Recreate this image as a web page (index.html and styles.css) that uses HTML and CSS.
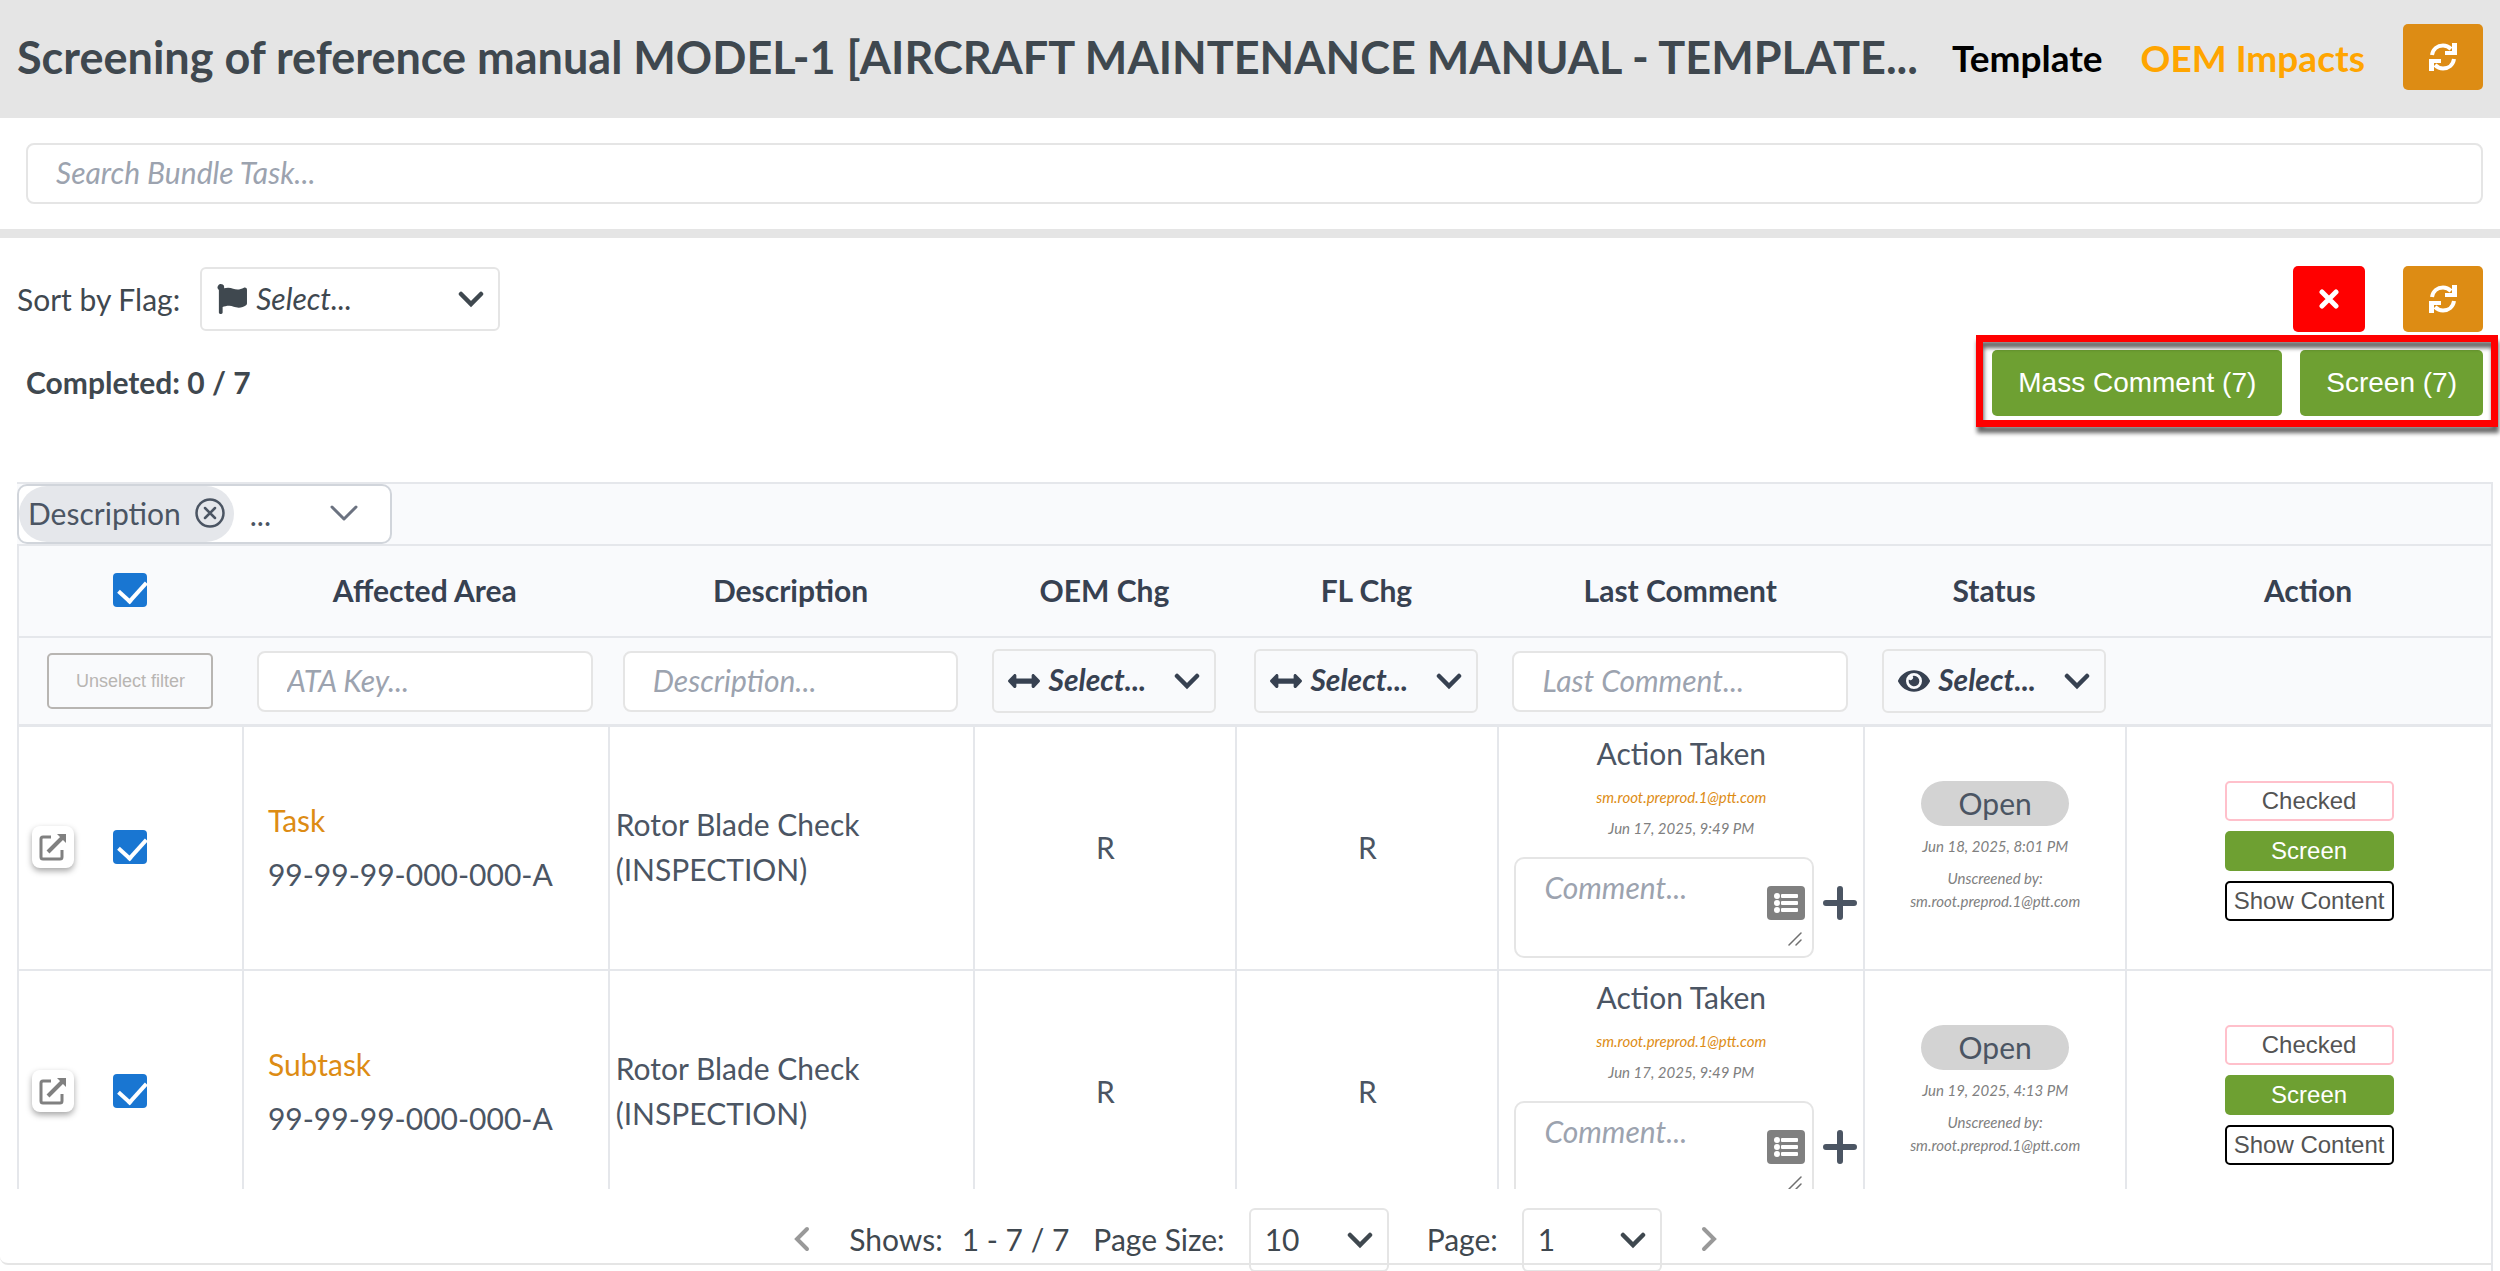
FILE: index.html
```html
<!DOCTYPE html>
<html lang="en">
<head>
    <meta charset="UTF-8">
    <title>Screening of reference manual</title>
    <meta name="viewport" content="width=device-width, initial-scale=1.0">
    <link rel="stylesheet" href="styles.css">
</head>
<body>
    <!-- Shared icons -->
    <svg class="sprite" aria-hidden="true">
        <symbol id="i-refresh" viewBox="0 0 28 28">
            <path d="M3 12C4 6 8.500 2.500 14 2.500c3.500 0 6 1.500 8 3.500M25 16c-1 6-5.500 9.500-11 9.500-3.500 0-6-1.500-8-3.500" fill="none" stroke="currentColor" stroke-width="4"/>
            <path d="M28 0v12H16V8h7V0zM0 28V16h12V20H5v8z" fill="currentColor"/>
        </symbol>
        <symbol id="i-times" viewBox="0 0 20 20">
            <path d="M3 3l14 14M17 3L3 17" fill="none" stroke="currentColor" stroke-width="5" stroke-linecap="round"/>
        </symbol>
        <symbol id="i-chevron" viewBox="0 0 26 18">
            <path d="M3 4l10 10L23 4" fill="none" stroke="currentColor" stroke-width="4.500" stroke-linecap="round"/>
        </symbol>
        <symbol id="i-angle" viewBox="0 0 28 18">
            <path d="M2 2l12 12L26 2" fill="none" stroke="currentColor" stroke-width="3" stroke-linecap="round" stroke-linejoin="round"/>
        </symbol>
        <symbol id="i-page" viewBox="0 0 18 28">
            <path d="M14 4L4 14l10 10" fill="none" stroke="currentColor" stroke-width="4" stroke-linecap="round"/>
        </symbol>
        <symbol id="i-flag" viewBox="0 0 512 512">
            <path d="M349.600 94.100c-51.100 0-92.900-32-161.300-32-25.300 0-48 4.400-69.100 12.100A56 56 0 1 0 32 101.900V488c0 13.300 10.700 24 24 24h16c13.300 0 24-10.700 24-24v-94.600c28.300-12.100 63.600-22.100 114.400-22.100 51.100 0 92.900 32 161.300 32 48.900 0 88-16.500 123.900-41.100 10-6.800 16-18.100 16-30.200V96c0-26.800-27.800-44.200-52-32.900-34.300 16-76.500 31-110 31z" fill="currentColor"/>
        </symbol>
        <symbol id="i-arrows-h" viewBox="0 0 512 256">
            <path d="M378 39v47H134V39c0-21-26-32-41-17L7 111c-9 10-9 25 0 34l86 89c15 15 41 4 41-17v-47h244v47c0 21 26 32 41 17l86-89c9-9 9-24 0-34l-86-89c-15-15-41-4-41 17z" fill="currentColor"/>
        </symbol>
        <symbol id="i-eye" viewBox="0 0 576 512">
            <path d="M572.500 241.400C518.300 135.600 410.900 64 288 64S57.700 135.600 3.500 241.400a32.400 32.400 0 0 0 0 29.200C57.700 376.400 165.100 448 288 448s230.300-71.600 284.500-177.400a32.400 32.400 0 0 0 0-29.200zM288 400a144 144 0 1 1 144-144 143.900 143.900 0 0 1-144 144zm0-240a95.300 95.300 0 0 0-25.300 3.800 47.900 47.900 0 0 1-66.900 66.900A95.800 95.800 0 1 0 288 160z" fill="currentColor"/>
        </symbol>
        <symbol id="i-remove" viewBox="0 0 30 30">
            <circle cx="15" cy="15" r="13.500" fill="none" stroke="currentColor" stroke-width="2.500"/>
            <path d="M10 10l10 10M20 10L10 20" fill="none" stroke="currentColor" stroke-width="2.500" stroke-linecap="round"/>
        </symbol>
        <symbol id="i-open" viewBox="0 0 28 28">
            <path d="M12 4H4a2 2 0 0 0-2 2v18a2 2 0 0 0 2 2h17a2 2 0 0 0 2-2v-7" fill="none" stroke="currentColor" stroke-width="3"/>
            <path d="M9 19L24 4" fill="none" stroke="currentColor" stroke-width="4"/>
            <path d="M18 1h9v9z" fill="currentColor"/>
        </symbol>
        <symbol id="i-list" viewBox="0 0 38 34">
            <rect width="38" height="34" rx="4" fill="#808080"/>
            <g fill="#fff">
                <circle cx="10" cy="10" r="3"/><circle cx="10" cy="17" r="3"/><circle cx="10" cy="24" r="3"/>
                <rect x="14" y="8" width="17" height="4" rx="1"/><rect x="14" y="15" width="17" height="4" rx="1"/><rect x="14" y="22" width="17" height="4" rx="1"/>
            </g>
        </symbol>
        <symbol id="i-grip" viewBox="0 0 14 14">
            <path d="M1 13L13 1M8 13l5-5" fill="none" stroke="#707070" stroke-width="1.500" stroke-linecap="round"/>
        </symbol>
        <symbol id="i-plus" viewBox="0 0 34 34">
            <path d="M17 3v28M3 17h28" fill="none" stroke="currentColor" stroke-width="6" stroke-linecap="round"/>
        </symbol>
    </svg>

    <header class="header">
        <h1>Screening of reference manual MODEL-1 [AIRCRAFT MAINTENANCE MANUAL - TEMPLATE...</h1>
        <nav class="header-links">
            <a href="#" class="link-template">Template</a>
            <a href="#" class="link-impacts">OEM Impacts</a>
        </nav>
        <button class="btn btn-refresh" aria-label="Refresh"><svg class="icon"><use href="#i-refresh"/></svg></button>
    </header>

    <div class="search">
        <input type="text" class="field" placeholder="Search Bundle Task..." aria-label="Search Bundle Task">
    </div>

    <main class="panel">
        <div class="toolbar">
            <label for="flagSort">Sort by Flag:</label>
            <div class="select-box flag-select">
                <select id="flagSort"><option>Select...</option></select>
                <svg class="lead"><use href="#i-flag"/></svg>
                <svg class="arrow"><use href="#i-chevron"/></svg>
            </div>
            <button class="btn btn-clear" aria-label="Clear"><svg class="icon-small"><use href="#i-times"/></svg></button>
            <button class="btn btn-refresh" aria-label="Refresh list"><svg class="icon"><use href="#i-refresh"/></svg></button>
        </div>

        <div class="summary">
            <div class="completed">Completed: 0 / 7</div>
            <div class="mass-actions">
                <button class="btn btn-green">Mass Comment (7)</button>
                <button class="btn btn-green">Screen (7)</button>
                <div class="highlight"></div>
            </div>
        </div>

        <section class="grid">
            <div class="grid-scroll">
                <div class="columns-bar">
                    <div class="column-picker">
                        <span class="chip">Description <button aria-label="Remove Description"><svg><use href="#i-remove"/></svg></button></span>
                        <span>...</span>
                        <button class="picker-toggle" aria-label="Choose columns"><svg><use href="#i-angle"/></svg></button>
                    </div>
                </div>

                <table class="tasks">
                    <colgroup>
                        <col class="col-check"><col class="col-wide"><col class="col-wide"><col class="col-mid"><col class="col-mid"><col class="col-wide"><col class="col-mid"><col class="col-wide">
                    </colgroup>
                    <thead>
                        <tr class="titles">
                            <th><input type="checkbox" class="check" checked aria-label="Select all"></th>
                            <th>Affected Area</th>
                            <th>Description</th>
                            <th>OEM Chg</th>
                            <th>FL Chg</th>
                            <th>Last Comment</th>
                            <th>Status</th>
                            <th>Action</th>
                        </tr>
                        <tr class="filters">
                            <th><button class="btn-unselect" disabled>Unselect filter</button></th>
                            <th><input type="text" class="field" placeholder="ATA Key..." aria-label="ATA Key"></th>
                            <th><input type="text" class="field" placeholder="Description..." aria-label="Description"></th>
                            <th>
                                <div class="select-box">
                                    <select aria-label="OEM Chg"><option>Select...</option></select>
                                    <svg class="lead"><use href="#i-arrows-h"/></svg>
                                    <svg class="arrow"><use href="#i-chevron"/></svg>
                                </div>
                            </th>
                            <th>
                                <div class="select-box">
                                    <select aria-label="FL Chg"><option>Select...</option></select>
                                    <svg class="lead"><use href="#i-arrows-h"/></svg>
                                    <svg class="arrow"><use href="#i-chevron"/></svg>
                                </div>
                            </th>
                            <th><input type="text" class="field" placeholder="Last Comment..." aria-label="Last Comment"></th>
                            <th>
                                <div class="select-box">
                                    <select aria-label="Status"><option>Select...</option></select>
                                    <svg class="lead"><use href="#i-eye"/></svg>
                                    <svg class="arrow"><use href="#i-chevron"/></svg>
                                </div>
                            </th>
                            <th></th>
                        </tr>
                    </thead>
                    <tbody>
                        <tr>
                            <td class="pick">
                                <div class="pick-row">
                                    <button class="btn-open" aria-label="Open task"><svg><use href="#i-open"/></svg></button>
                                    <input type="checkbox" class="check" checked aria-label="Select task">
                                </div>
                            </td>
                            <td class="area"><a href="#">Task</a><div>99-99-99-000-000-A</div></td>
                            <td class="desc">Rotor Blade Check (INSPECTION)</td>
                            <td>R</td>
                            <td>R</td>
                            <td class="comment">
                                <div>Action Taken</div>
                                <div class="meta mail">sm.root.preprod.1@ptt.com</div>
                                <div class="meta">Jun 17, 2025, 9:49 PM</div>
                                <div class="comment-row">
                                    <div class="comment-box">
                                        <textarea placeholder="Comment..." aria-label="Comment"></textarea>
                                        <button aria-label="Templates"><svg><use href="#i-list"/></svg></button>
                                        <svg class="grip"><use href="#i-grip"/></svg>
                                    </div>
                                    <button class="btn-add" aria-label="Add comment"><svg><use href="#i-plus"/></svg></button>
                                </div>
                            </td>
                            <td class="status">
                                <span class="badge">Open</span>
                                <div class="meta">Jun 18, 2025, 8:01 PM</div>
                                <div class="meta by">Unscreened by:<br>sm.root.preprod.1@ptt.com</div>
                            </td>
                            <td class="actions">
                                <div class="row-actions">
                                    <button class="checked">Checked</button>
                                    <button class="screen">Screen</button>
                                    <button class="show">Show Content</button>
                                </div>
                            </td>
                        </tr>
                        <tr>
                            <td class="pick">
                                <div class="pick-row">
                                    <button class="btn-open" aria-label="Open subtask"><svg><use href="#i-open"/></svg></button>
                                    <input type="checkbox" class="check" checked aria-label="Select subtask">
                                </div>
                            </td>
                            <td class="area"><a href="#">Subtask</a><div>99-99-99-000-000-A</div></td>
                            <td class="desc">Rotor Blade Check (INSPECTION)</td>
                            <td>R</td>
                            <td>R</td>
                            <td class="comment">
                                <div>Action Taken</div>
                                <div class="meta mail">sm.root.preprod.1@ptt.com</div>
                                <div class="meta">Jun 17, 2025, 9:49 PM</div>
                                <div class="comment-row">
                                    <div class="comment-box">
                                        <textarea placeholder="Comment..." aria-label="Comment"></textarea>
                                        <button aria-label="Templates"><svg><use href="#i-list"/></svg></button>
                                        <svg class="grip"><use href="#i-grip"/></svg>
                                    </div>
                                    <button class="btn-add" aria-label="Add comment"><svg><use href="#i-plus"/></svg></button>
                                </div>
                            </td>
                            <td class="status">
                                <span class="badge">Open</span>
                                <div class="meta">Jun 19, 2025, 4:13 PM</div>
                                <div class="meta by">Unscreened by:<br>sm.root.preprod.1@ptt.com</div>
                            </td>
                            <td class="actions">
                                <div class="row-actions">
                                    <button class="checked">Checked</button>
                                    <button class="screen">Screen</button>
                                    <button class="show">Show Content</button>
                                </div>
                            </td>
                        </tr>
                    </tbody>
                </table>
            </div>

            <footer class="pager">
                <button class="page-nav" aria-label="Previous page"><svg><use href="#i-page"/></svg></button>
                <span class="shows">Shows:</span>
                <span class="range">1 - 7 / 7</span>
                <label for="pageSize">Page Size:</label>
                <div class="select-box">
                    <select id="pageSize"><option>10</option></select>
                    <svg class="arrow"><use href="#i-chevron"/></svg>
                </div>
                <label for="pageNo">Page:</label>
                <div class="select-box">
                    <select id="pageNo"><option>1</option></select>
                    <svg class="arrow"><use href="#i-chevron"/></svg>
                </div>
                <button class="page-nav next" aria-label="Next page"><svg><use href="#i-page"/></svg></button>
            </footer>
        </section>
    </main>
</body>
</html>
```
FILE: styles.css
```css
* {
    box-sizing: border-box;
}

body {
    margin: 0;
    height: 100vh;
    overflow: hidden;
    display: flex;
    flex-direction: column;
    background: #fff;
    color: #3f484f;
    font-family: Lato, "Open Sans", sans-serif;
    font-size: 30px;
}

button,
input,
select,
textarea {
    font: inherit;
    color: inherit;
    margin: 0;
}

button {
    border: 0;
    padding: 0;
    background: none;
    cursor: pointer;
}

svg {
    display: block;
}

.sprite {
    display: none;
}

/* Header */
.header {
    display: flex;
    align-items: center;
    height: 118px;
    padding: 0 17px 4px;
    background: #e5e5e5;
    flex-shrink: 0;
}

.header h1 {
    flex: 1;
    min-width: 0;
    margin: 0;
    font-size: 45px;
    font-weight: 700;
    white-space: nowrap;
    overflow: hidden;
    text-overflow: ellipsis;
}

.header-links {
    display: flex;
    gap: 38px;
    margin: 0 38px 0 28px;
    font-size: 37px;
    font-weight: 700;
}

.header-links a {
    text-decoration: none;
}

.link-template {
    color: #000;
}

.link-impacts {
    color: #ffa500;
}

/* Buttons */
.btn {
    display: flex;
    align-items: center;
    justify-content: center;
    height: 66px;
    border-radius: 5px;
    color: #fff;
    flex-shrink: 0;
}

.btn-refresh {
    width: 80px;
    background: #dd8c14;
}

.btn-clear {
    width: 72px;
    background: #f00;
}

.btn-green {
    padding: 0 26px;
    background: #6ea032;
    font-family: "Liberation Sans", sans-serif;
    font-size: 28px;
}

.icon {
    width: 28px;
    height: 28px;
}

.icon-small {
    width: 20px;
    height: 20px;
}

/* Fields */
.field {
    display: block;
    width: 100%;
    height: 61px;
    padding: 0 28px 3px;
    border: 2px solid #e5e5e5;
    border-radius: 8px;
    background: #fff;
    font-weight: 400;
}

.field::placeholder,
textarea::placeholder {
    color: #9ca3af;
    font-style: italic;
}

.search {
    padding: 25px 17px 25px 26px;
    border-bottom: 9px solid #e5e5e5;
}

/* The icon, the select and the arrow share one grid cell */
.select-box {
    display: grid;
    align-items: center;
    height: 64px;
}

.select-box > * {
    grid-area: 1 / 1;
}

.select-box select {
    appearance: none;
    width: 100%;
    height: 100%;
    padding: 0 14px 3px;
    border: 2px solid #e5e5e5;
    border-radius: 6px;
    background: transparent;
}

.select-box svg {
    pointer-events: none;
}

.select-box .lead {
    width: 32px;
    height: 30px;
    margin-left: 16px;
}

.select-box:has(.lead) select {
    padding-left: 54px;
    font-style: italic;
}

.select-box .arrow {
    justify-self: end;
    width: 26px;
    height: 18px;
    margin-right: 16px;
}

/* Panel */
.panel {
    flex: 1;
    min-height: 0;
    display: flex;
    flex-direction: column;
}

.toolbar {
    display: flex;
    align-items: center;
    padding: 28px 17px 0;
}

.flag-select {
    width: 300px;
    margin-left: 20px;
    margin-right: auto;
}

.toolbar .btn-clear {
    margin-right: 38px;
}

.summary {
    display: flex;
    align-items: center;
    justify-content: space-between;
    padding: 18px 17px 0 26px;
}

.completed {
    padding-bottom: 3px;
    font-weight: 700;
}

.mass-actions {
    position: relative;
    display: flex;
    gap: 18px;
}

.highlight {
    position: absolute;
    top: -15px;
    right: -15px;
    bottom: -11px;
    left: -16px;
    border: 7px solid #f00;
    filter: drop-shadow(1px 6px 2px rgba(0, 0, 0, 0.6));
    pointer-events: none;
}

/* Grid */
.grid {
    flex: 1;
    min-height: 0;
    display: flex;
    flex-direction: column;
    margin: 66px 7px 0 0;
    padding-bottom: 6px;
    border-right: 2px solid #e5e7eb;
}

.grid-scroll {
    flex: 1;
    min-height: 0;
    overflow: hidden;
    margin-left: 17px;
    border-top: 2px solid #e5e7eb;
    color: #4b5563;
}

.columns-bar {
    height: 62px;
    background: #f9fafc;
    border-bottom: 2px solid #e5e7eb;
}

.column-picker {
    display: flex;
    align-items: center;
    gap: 16px;
    width: 375px;
    height: 60px;
    padding-right: 32px;
    border: 2px solid #d1d5db;
    border-radius: 10px;
    background: #fff;
}

.chip {
    display: flex;
    align-items: center;
    gap: 14px;
    height: 56px;
    padding: 0 9px 2px;
    border-radius: 28px;
    background: #e5e7eb;
}

.chip svg {
    width: 30px;
    height: 30px;
}

.picker-toggle {
    margin-left: auto;
    color: #6b7280;
}

.picker-toggle svg {
    width: 28px;
    height: 18px;
}

.tasks {
    width: 100%;
    table-layout: fixed;
    border-collapse: separate;
    border-spacing: 0;
    line-height: 45px;
}

.col-check {
    width: 9.1%;
}

.col-wide {
    width: 14.8%;
}

.col-mid {
    width: 10.6%;
}

.tasks th {
    padding: 0;
    background: #f9fafc;
    border-bottom: 2px solid #e5e7eb;
    color: #374151;
    font-weight: 700;
}

.tasks th:first-child {
    border-left: 2px solid #e5e7eb;
}

.tasks .titles th {
    height: 92px;
    padding-bottom: 2px;
}

.tasks .filters th {
    height: 89px;
    padding: 0 15px;
    border-bottom-width: 3px;
}

.filters .select-box {
    margin: 0 4px;
    text-align: left;
}

.filters select {
    font-weight: 700;
}

.tasks td {
    height: 244px;
    padding: 0 0 2px;
    border-left: 2px solid #e5e7eb;
    border-bottom: 2px solid #e5e7eb;
    text-align: center;
    vertical-align: middle;
}

.check {
    appearance: none;
    display: block;
    width: 34px;
    height: 34px;
    margin: 0 auto;
    border-radius: 4px;
    background: #1976d2;
}

.check:checked::before {
    content: "";
    display: block;
    width: 13px;
    height: 23px;
    margin: 2px 0 0 11px;
    border: solid #fff;
    border-width: 0 4px 4px 0;
    transform: rotate(42deg);
}

.btn-unselect {
    display: block;
    width: 166px;
    height: 56px;
    margin: 0 auto;
    border: 2px solid #b8b5b2;
    border-radius: 5px;
    color: #b8b5b2;
    font-family: "Liberation Sans", sans-serif;
    font-size: 18px;
    font-weight: 400;
}

.pick-row {
    display: grid;
    grid-template-columns: 1fr 34px 1fr;
    align-items: center;
}

.btn-open {
    display: grid;
    place-items: center;
    width: 42px;
    height: 42px;
    margin-left: 13px;
    border-radius: 8px;
    background: #fff;
    color: #808080;
    box-shadow: 0 3px 6px rgba(0, 0, 0, 0.35);
}

.btn-open svg {
    width: 28px;
    height: 28px;
}

.tasks td.area {
    padding-left: 24px;
    text-align: left;
}

.area a {
    display: block;
    margin-bottom: 9px;
    color: #dd8c14;
    text-decoration: none;
}

.tasks td.desc {
    padding: 0 90px 2px 6px;
    text-align: left;
}

.meta {
    color: #808080;
    font-size: 15px;
    font-style: italic;
    line-height: 31px;
}

.mail {
    margin-top: 6px;
    color: #dd8c14;
}

.tasks td.comment {
    vertical-align: top;
    padding: 4px 0 0;
}

.comment-row {
    display: flex;
    align-items: flex-start;
    gap: 9px;
    margin: 13px 6px 0 15px;
}

.comment-box {
    position: relative;
    flex: 1;
}

.comment-box textarea {
    display: block;
    width: 100%;
    height: 101px;
    padding: 6px 54px 8px 28px;
    border: 2px solid #e5e5e5;
    border-radius: 10px;
    line-height: 45px;
    overflow: hidden;
    resize: none;
}

.comment-box button {
    position: absolute;
    right: 9px;
    top: 29px;
}

.comment-box button svg {
    width: 38px;
    height: 34px;
}

.comment-box .grip {
    position: absolute;
    right: 12px;
    bottom: 12px;
    width: 14px;
    height: 14px;
    pointer-events: none;
}

.btn-add {
    margin-top: 29px;
}

.btn-add svg {
    width: 34px;
    height: 34px;
}

.badge {
    display: block;
    width: 148px;
    margin: 0 auto 5px;
    border-radius: 23px;
    background: #d3d3d3;
}

.meta.by {
    margin-top: 5px;
    line-height: 23px;
}

.tasks td.actions {
    padding: 6px 0 0;
}

.row-actions {
    display: flex;
    flex-direction: column;
    gap: 10px;
    width: 169px;
    margin: 0 auto;
}

.row-actions button {
    height: 40px;
    border-radius: 5px;
    color: #545454;
    font-family: "Liberation Sans", sans-serif;
    font-size: 24px;
    line-height: 28px;
    white-space: nowrap;
}

.row-actions .checked {
    border: 2px solid #ffc0cb;
}

.row-actions .screen {
    background: #6ea032;
    color: #fff;
}

.row-actions .show {
    border: 2px solid #000;
}

/* Pagination */
.pager {
    display: flex;
    align-items: flex-start;
    justify-content: center;
    height: 76px;
    padding: 19px 0 0 20px;
    border-bottom: 2px solid #e5e5e5;
    border-bottom-left-radius: 8px;
    line-height: 62px;
}

.pager .select-box {
    width: 140px;
    margin: 0 38px 0 24px;
    line-height: normal;
}

.shows {
    margin: 0 19px 0 38px;
}

.range {
    margin-right: 24px;
}

.page-nav {
    height: 62px;
    color: #999;
}

.page-nav svg {
    width: 18px;
    height: 28px;
}

.next svg {
    transform: rotate(180deg);
}
```
